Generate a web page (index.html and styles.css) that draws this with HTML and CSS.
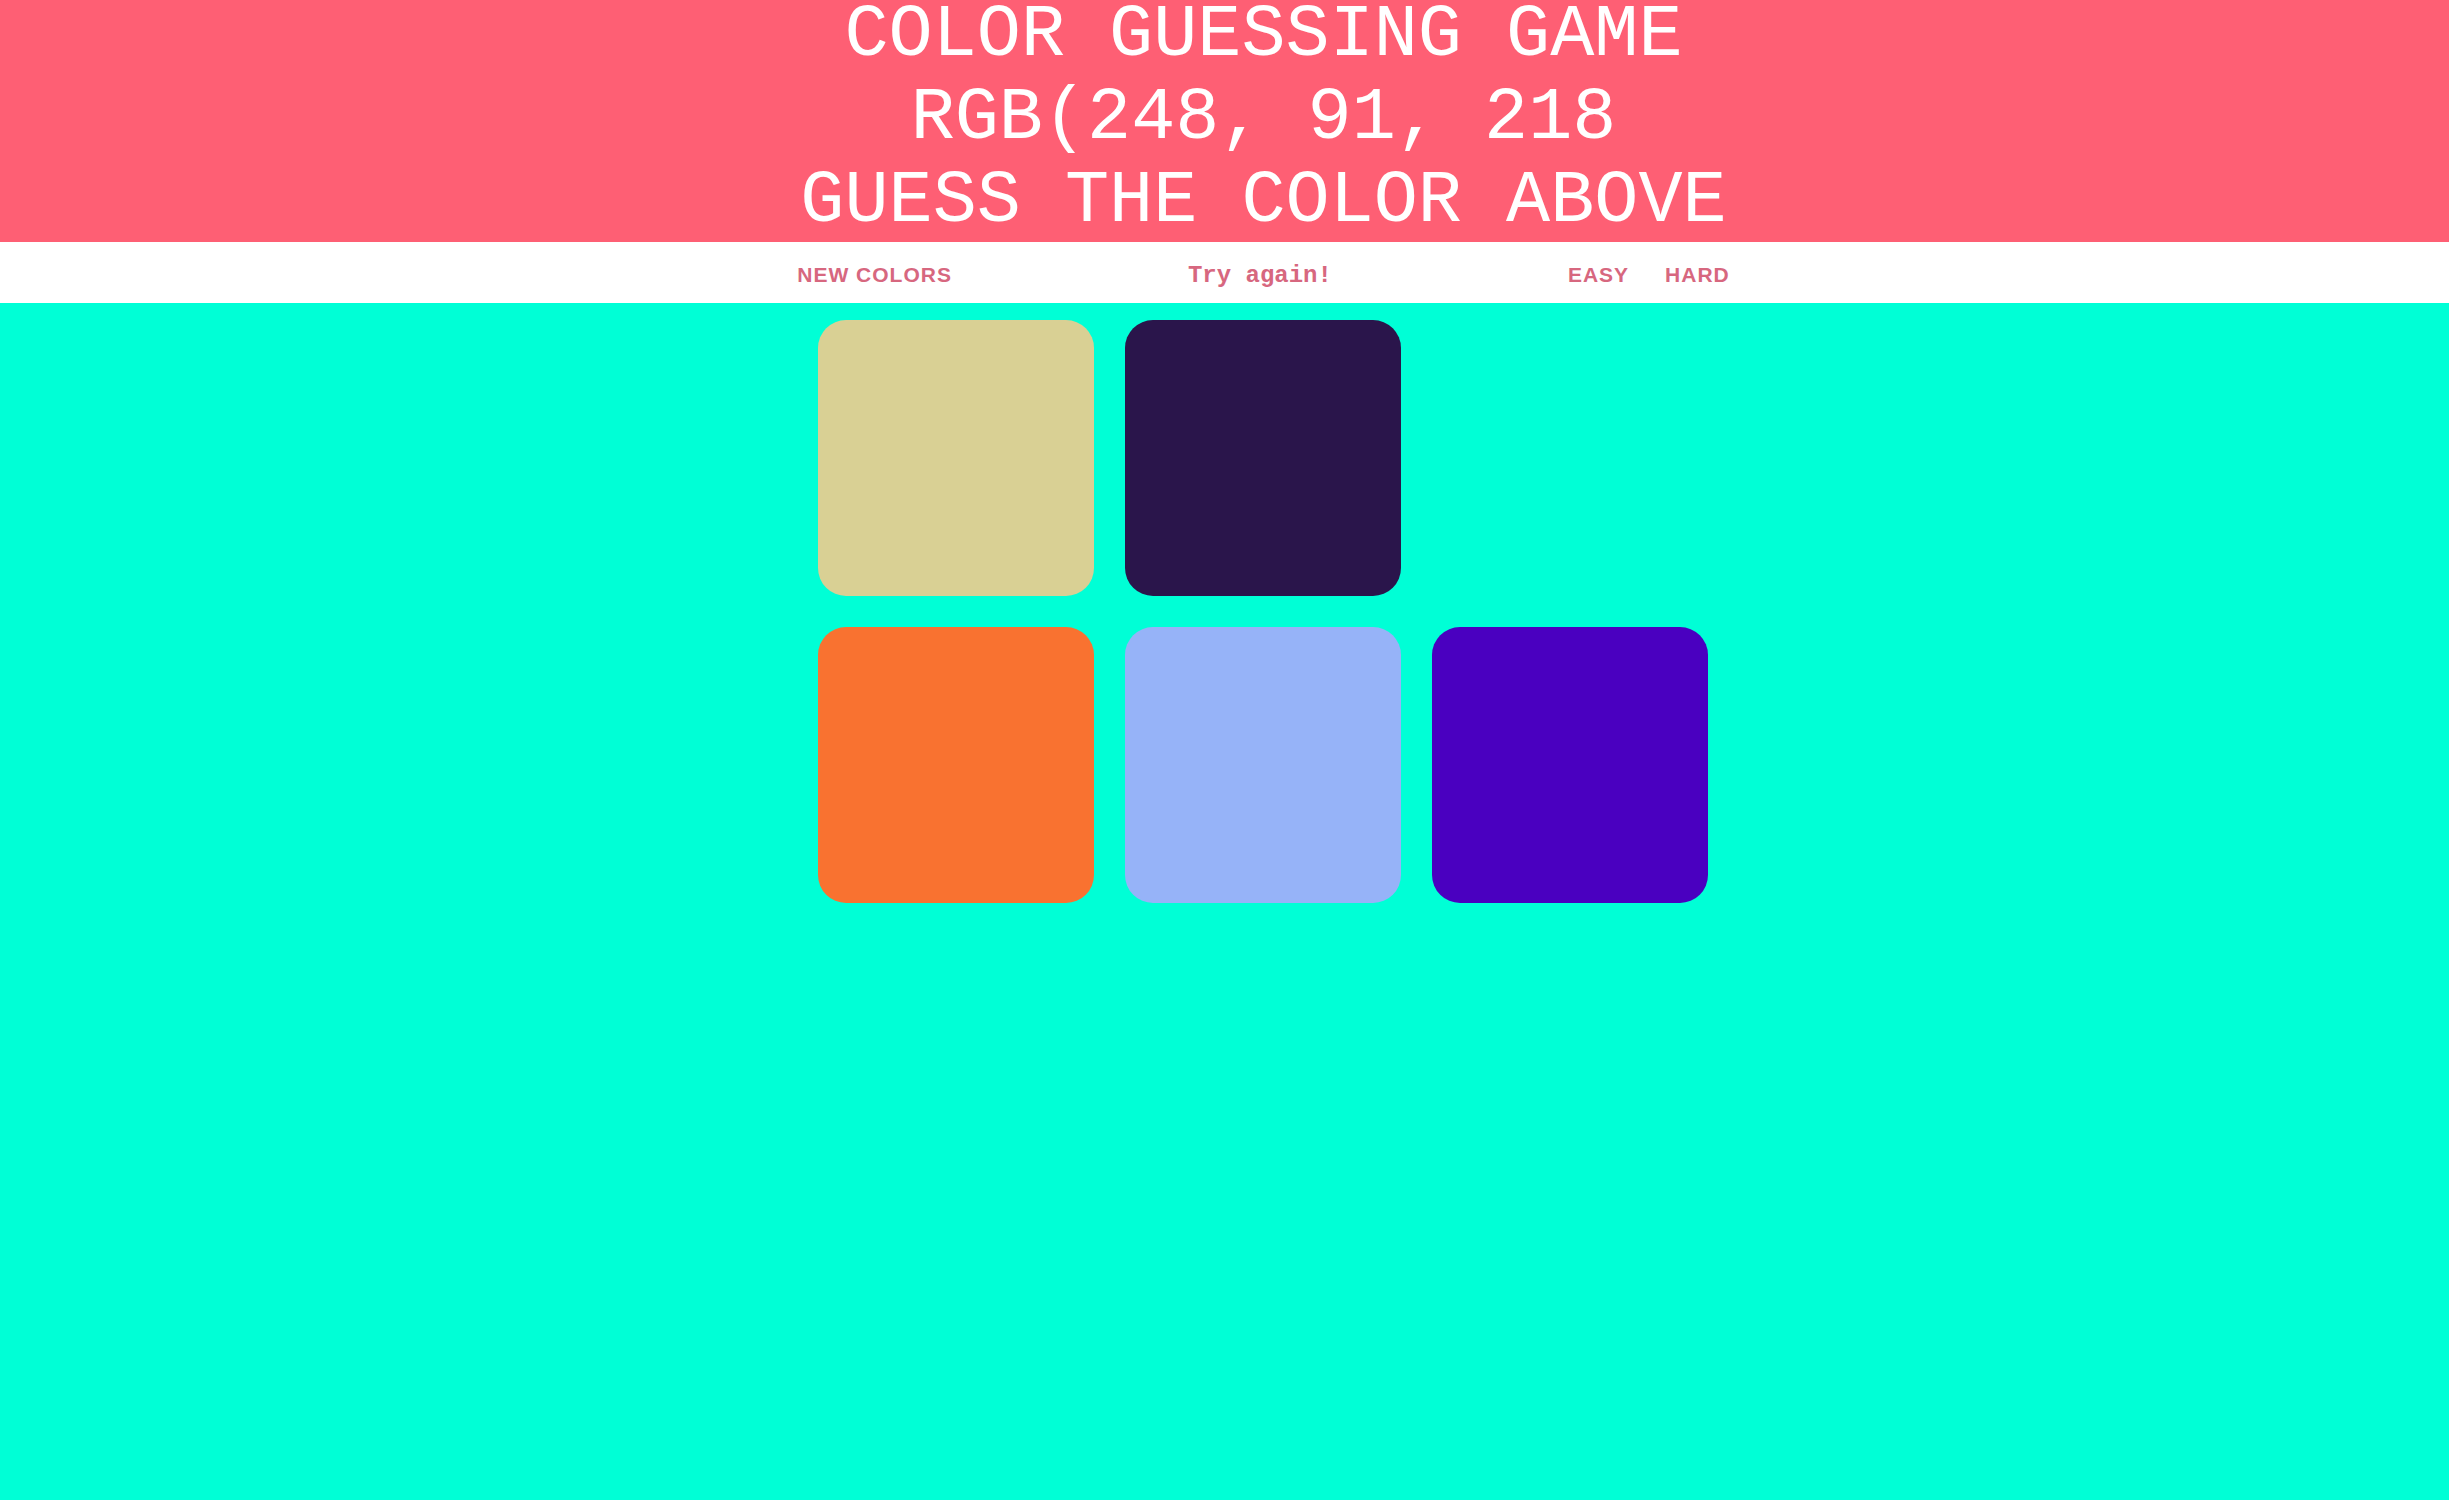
FILE: index.html
```html
<!DOCTYPE html>
<html lang="en">
<head>
<meta charset="utf-8">
<title>Color Guessing Game</title>
<link rel="stylesheet" href="styles.css">
</head>
<body>
  <header class="banner">
    <h1 class="title">
      <span class="title-line">COLOR GUESSING GAME</span>
      <span class="title-line">RGB(248, 91, 218</span>
      <span class="title-line">GUESS THE COLOR ABOVE</span>
    </h1>
  </header>
  <nav class="stripe">
    <button class="stripe-btn">NEW COLORS</button>
    <span class="message">Try again!</span>
    <button class="stripe-btn">EASY</button>
    <button class="stripe-btn">HARD</button>
  </nav>
  <main class="board">
    <div class="grid">
      <div class="square sq-beige"></div>
      <div class="square sq-navy"></div>
      <div class="square sq-hidden"></div>
      <div class="square sq-orange"></div>
      <div class="square sq-periwinkle"></div>
      <div class="square sq-purple"></div>
    </div>
  </main>
</body>
</html>
```

FILE: styles.css
```css
html, body {
  margin: 0;
  padding: 0;
}

body {
  background: #00ffd6;
  min-height: 1500px;
  font-family: "Liberation Sans", Arial, sans-serif;
  overflow: hidden;
}

.banner {
  background: #fe5f74;
  height: 242px;
  overflow: hidden;
  padding-left: 78px;
}

.title {
  margin: -6px 0 0;
  font-family: "Liberation Mono", "Courier New", monospace;
  font-weight: normal;
  font-size: 73.5px;
  line-height: normal;
  color: #ffffff;
  text-align: center;
}

.title-line {
  display: block;
}

.stripe {
  background: #ffffff;
  height: 61px;
  box-sizing: border-box;
  padding: 20px 0 0 78px;
  display: flex;
  justify-content: center;
  align-items: baseline;
}

.stripe-btn {
  border: none;
  background: none;
  padding: 0 18px;
  margin: 0;
  font-family: "Liberation Sans", Arial, sans-serif;
  font-weight: 700;
  font-size: 21px;
  letter-spacing: 1px;
  line-height: normal;
  color: #d7677f;
  text-transform: uppercase;
}

.message {
  width: 580px;
  text-align: center;
  font-family: "Liberation Mono", "Courier New", monospace;
  font-weight: 700;
  font-size: 24px;
  color: #d7677f;
}

.board {
  padding: 17px 0 0 76px;
  display: flex;
  justify-content: center;
}

.grid {
  display: grid;
  grid-template-columns: repeat(3, 276px);
  grid-auto-rows: 276px;
  gap: 31px;
}

.square {
  border-radius: 28px;
}

.sq-beige { background: #d9d094; }
.sq-navy { background: #2a154b; }
.sq-hidden { background: transparent; }
.sq-orange { background: #f97230; }
.sq-periwinkle { background: #96b3f8; }
.sq-purple { background: #4a00c0; }
```
